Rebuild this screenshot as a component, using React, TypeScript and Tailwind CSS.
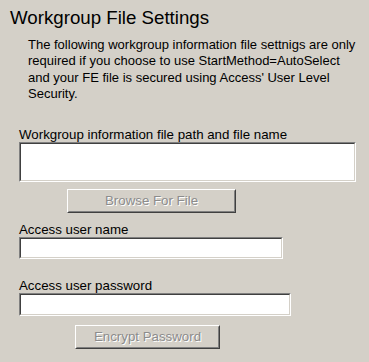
import React from "react";

function Sunken({ w, h }: { w: string; h: string }) {
  return (
    <div className={`${w} ${h} border border-t-[#808080] border-l-[#808080] border-r-white border-b-white`}>
      <div className="w-full h-full bg-white border border-t-[#404040] border-l-[#404040] border-r-[#d4d0c8] border-b-[#d4d0c8]" />
    </div>
  );
}

function Btn({ label, cls }: { label: string; cls: string }) {
  return (
    <div className={`${cls} h-[24px] border border-t-white border-l-white border-r-[#404040] border-b-[#404040]`}>
      <div className="w-full h-full flex items-center justify-center border border-t-[#d4d0c8] border-l-[#d4d0c8] border-r-[#808080] border-b-[#808080] text-[13.3px] text-[#8c8c8c] [text-shadow:1px_1px_0_#ffffff]">
        {label}
      </div>
    </div>
  );
}

export default function App() {
  return (
    <div
      className="w-[369px] h-[362px] bg-[#d4d0c8] text-black overflow-hidden flex flex-col"
      style={{ fontFamily: '"Liberation Sans", Arial, sans-serif' }}
    >
      <div className="mt-[7px] pl-[10px] text-[18.7px] leading-[22px]">Workgroup File Settings</div>
      <div className="mt-[8px] pl-[28px] text-[13px] leading-[16.3px]">
        The following workgroup information file settnigs are only
        <br />
        required if you choose to use StartMethod=AutoSelect
        <br />
        and your FE file is secured using Access' User Level
        <br />
        Security.
      </div>
      <div className="mt-[25px] pl-[19px] text-[13.3px] leading-[15px]">
        Workgroup information file path and file name
      </div>
      <div className="pl-[19px]">
        <Sunken w="w-[337px]" h="h-[40px]" />
      </div>
      <div className="mt-[7px] pl-[67px]">
        <Btn label="Browse For File" cls="w-[169px]" />
      </div>
      <div className="mt-[10px] pl-[19px] text-[13.3px] leading-[14px]">Access user name</div>
      <div className="pl-[19px]">
        <Sunken w="w-[264px]" h="h-[22px]" />
      </div>
      <div className="mt-[20px] pl-[19px] text-[13.3px] leading-[14px]">Access user password</div>
      <div className="pl-[19px]">
        <Sunken w="w-[272px]" h="h-[23px]" />
      </div>
      <div className="mt-[9px] pl-[75px]">
        <Btn label="Encrypt Password" cls="w-[145px]" />
      </div>
    </div>
  );
}
